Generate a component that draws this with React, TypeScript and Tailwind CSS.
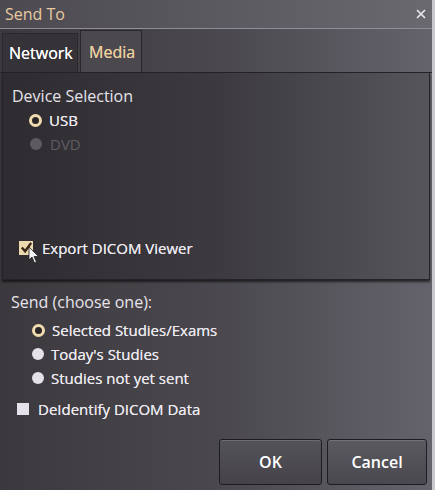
import { X } from "lucide-react";

// Radio dot used by both option groups
function Radio({ on, off }: { on?: boolean; off?: boolean }) {
  if (on)
    return (
      <span className="w-[13px] h-[13px] rounded-full border-[3px] border-[#f0dcae] bg-[#2a2628] shrink-0" />
    );
  return (
    <span
      className={
        off
          ? "w-[12px] h-[12px] rounded-full bg-[#5e5b60] shrink-0"
          : "w-[12px] h-[12px] rounded-full bg-[#e4e2e8] shrink-0"
      }
    />
  );
}

const sendOptions = [
  { label: "Selected Studies/Exams", on: true },
  { label: "Today's Studies", on: false },
  { label: "Studies not yet sent", on: false },
];

export default function App() {
  return (
    <div className="w-[435px] h-[490px] flex flex-col bg-linear-to-r from-[#3c393e] via-[#4a484e] to-[#64636b] font-['Open_Sans','Noto_Sans',sans-serif] text-[#ebe8ee] overflow-hidden border-r-[3px] border-[#c9c8cc]">
      {/* Title bar */}
      <div className="h-[29px] shrink-0 flex items-center justify-between pl-[5px] pr-[4px] border-b border-[#8f8d95] bg-linear-to-r from-[#4c4a50] to-[#6a6970]">
        <span className="text-[16px] text-[#e9caa0] leading-none">Send To</span>
        <X className="w-[14px] h-[14px] text-[#e6e4ea]" strokeWidth={3} />
      </div>

      {/* Tabs */}
      <div className="h-[44px] shrink-0 flex items-end pl-[2px] gap-[2px] border-b border-[#25222a]">
        <div className="h-[39px] w-[76px] flex items-center pl-[6px] border border-b-0 border-[#2a272d] bg-[#353238] text-[16px] text-white [text-shadow:0_0_0.6px_currentColor]">
          Network
        </div>
        <div className="h-[42px] w-[62px] flex items-center pl-[8px] border border-b-0 border-[#2a272d] bg-[#4b484e] text-[16px] text-[#ecce9e] [text-shadow:0_0_0.6px_currentColor]">
          Media
        </div>
      </div>

      {/* Media panel */}
      <div className="h-[207px] shrink-0 mx-[2px] flex flex-col border border-t-0 border-[#25222a] bg-linear-to-r from-[#2f2c31] via-[#3c3a40] to-[#56555c] shadow-[0_2px_2px_rgba(0,0,0,0.6)]">
        <div className="mt-[13px] pl-[9px] text-[16px] leading-[20px] text-[#e6e2ea]">Device Selection</div>
        <div className="mt-[2px] pl-[26px] flex items-center gap-[7px] h-[24px]">
          <Radio on />
          <span className="text-[15px] [text-shadow:0_0_0.6px_currentColor]">USB</span>
        </div>
        <div className="pl-[27px] flex items-center gap-[8px] h-[24px]">
          <Radio off />
          <span className="text-[15px] text-[#5f5c62]">DVD</span>
        </div>
        <div className="mt-auto mb-[20px] pl-[16px] flex items-center gap-[9px] relative">
          <span className="w-[14px] h-[14px] bg-[#ecd9b0] flex items-center justify-center">
            <svg viewBox="0 0 14 14" className="w-[13px] h-[13px]">
              <path d="M2 7 L5.5 11 L12 2" fill="none" stroke="#3a2616" strokeWidth="2.6" />
            </svg>
          </span>
          <span className="text-[15px] [text-shadow:0_0_0.6px_currentColor]">Export DICOM Viewer</span>
          <svg viewBox="0 0 12 18" className="absolute left-[25px] top-[9px] w-[12px] h-[18px]">
            <path d="M1 1 L1 14 L4 11 L6.5 17 L8.5 16 L6 10.5 L10.5 10.5 Z" fill="#f4f4f6" stroke="#222" strokeWidth="0.8" />
          </svg>
        </div>
      </div>

      {/* Send options */}
      <div className="flex-1 flex flex-col pl-[11px]">
        <div className="mt-[12px] text-[16px] leading-[20px] text-[#e8e4ec]">Send (choose one):</div>
        <div className="mt-[6px] flex flex-col pl-[21px]">
          {sendOptions.map((o) => (
            <div key={o.label} className="h-[24px] flex items-center gap-[7px]">
              <Radio on={o.on} />
              <span className="text-[15px] [text-shadow:0_0_0.6px_currentColor]">{o.label}</span>
            </div>
          ))}
        </div>
        <div className="mt-[8px] pl-[6px] flex items-center gap-[9px]">
          <span className="w-[12px] h-[12px] bg-[#e6e2ec]" />
          <span className="text-[15px] [text-shadow:0_0_0.6px_currentColor]">DeIdentify DICOM Data</span>
        </div>
        <div className="mt-auto mb-[5px] mr-[5px] flex justify-end gap-[5px]">
          <button className="w-[103px] h-[46px] rounded-[3px] border border-[#1e1c22] bg-linear-to-b from-[#55535a] to-[#454349] text-[16px] font-semibold text-white shadow-[inset_0_1px_0_rgba(255,255,255,0.15)]">
            OK
          </button>
          <button className="w-[100px] h-[46px] rounded-[3px] border border-[#1e1c22] bg-linear-to-b from-[#5c5a61] to-[#4a484f] text-[16px] font-semibold text-white shadow-[inset_0_1px_0_rgba(255,255,255,0.15)]">
            Cancel
          </button>
        </div>
      </div>
    </div>
  );
}
